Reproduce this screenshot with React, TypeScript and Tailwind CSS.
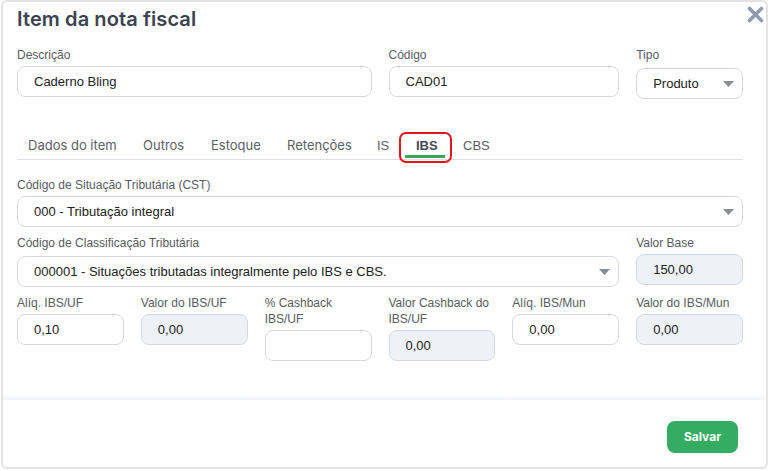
import React from "react";

const LABEL = "text-[12px] leading-[16px] text-[#585c63] mb-[3px]";
const SANS = { fontFamily: '"Liberation Sans", Arial, sans-serif' } as React.CSSProperties;
const INTER = { fontFamily: 'Inter, "Noto Sans", sans-serif' } as React.CSSProperties;

function Caret() {
  return (
    <svg width="11" height="6" viewBox="0 0 11 6" className="shrink-0">
      <path d="M0 0 L11 0 L5.5 6 Z" fill="#8a8d92" />
    </svg>
  );
}

function Box({
  value,
  grey,
  select,
  className = "",
}: {
  value?: string;
  grey?: boolean;
  select?: boolean;
  className?: string;
}) {
  return (
    <div
      className={`h-[31px] rounded-[8px] border border-[#d3d9e1] pl-[16px] pr-[8px] flex items-center text-[13px] text-[#222] ${
        grey ? "bg-[#eef1f5]" : "bg-white"
      } ${className}`}
    >
      <span className="flex-1 truncate">{value}</span>
      {select && <Caret />}
    </div>
  );
}

function Field({
  label,
  value,
  grey,
  select,
  className = "",
  boxClass = "",
}: {
  label: React.ReactNode;
  value?: string;
  grey?: boolean;
  select?: boolean;
  className?: string;
  boxClass?: string;
}) {
  return (
    <div className={`flex flex-col ${className}`}>
      <div className={LABEL}>{label}</div>
      <Box value={value} grey={grey} select={select} className={boxClass} />
    </div>
  );
}

export default function App() {
  return (
    <div className="w-[770px] h-[471px] bg-white pl-[1px] pr-[2px] pt-0 pb-[2px]" style={SANS}>
      <div className="relative h-full border-2 border-[#e3e3e3] rounded-[6px] flex flex-col overflow-hidden">
        {/* close */}
        <div className="absolute right-[2px] top-[4px] w-[17px] h-[17px]">
          <svg width="17" height="17" viewBox="0 0 17 17">
            <path d="M2.5 2.5 L14.5 14.5 M14.5 2.5 L2.5 14.5" stroke="#8e9bb0" strokeWidth="3.6" strokeLinecap="round" />
          </svg>
        </div>

        <div className="flex-1 flex flex-col pl-[14px] pr-[23px]">
          <h1
            className="mt-[3px] h-[28px] leading-[28px] text-[20px] font-semibold text-[#3b4250] tracking-[0.1px]"
            style={INTER}
          >
            Item da nota fiscal
          </h1>

          <div className="mt-[14px] grid grid-cols-6 gap-x-[17px]">
            <Field className="col-span-3" label="Descrição" value="Caderno Bling" />
            <Field className="col-span-2" label="Código" value="CAD01" />
            <Field className="col-span-1" label="Tipo" value="Produto" select boxClass="mt-[2px]" />
          </div>

          {/* tabs */}
          <div className="mt-[32px] h-[29px] pt-[2px] border-b border-[#dde1e7] flex items-center pl-[11px] text-[13px] text-[#5c6068]">
            <span className="w-[115px]" style={INTER}>Dados do item</span>
            <span className="w-[68px]" style={INTER}>Outros</span>
            <span className="w-[76px]" style={INTER}>Estoque</span>
            <span className="w-[90px]" style={INTER}>Retenções</span>
            <span className="w-[39px]">IS</span>
            <span className="w-[47px] relative inline-block leading-[16px]">
              <span className="font-bold text-[#454b55]">IBS</span>
              <span className="absolute left-[-11px] w-[40px] top-[17px] h-[3px] bg-[#3aa757]" />
              <span className="absolute left-[-17px] w-[53px] top-[-6px] h-[31px] rounded-[7px] border-2 border-[#e3141c]" />
            </span>
            <span>CBS</span>
          </div>

          <div className="mt-[17px] grid grid-cols-6 gap-x-[17px] gap-y-[8px] items-start">
            <Field className="col-span-6" label="Código de Situação Tributária (CST)" value="000 - Tributação integral" select />
            <Field
              className="col-span-5"
              label="Código de Classificação Tributária"
              value="000001 - Situações tributadas integralmente pelo IBS e CBS."
              select
              boxClass="mt-[2px]"
            />
            <Field className="col-span-1" label="Valor Base" value="150,00" grey />

            <Field label="Alíq. IBS/UF" value="0,10" />
            <Field label="Valor do IBS/UF" value="0,00" grey />
            <Field label={<>% Cashback<br />IBS/UF</>} value="" />
            <Field label={<>Valor Cashback do<br />IBS/UF</>} value="0,00" grey />
            <Field label="Alíq. IBS/Mun" value="0,00" />
            <Field label="Valor do IBS/Mun" value="0,00" grey />
          </div>

          <div className="flex-1" />
        </div>
        <div className="h-[6px] bg-gradient-to-b from-white to-[#f1f3f6]" />

        <div className="h-[67px] flex justify-end items-start pt-[21px] pr-[28px]">
          <button
            className="w-[71px] h-[32px] rounded-[8px] bg-[#34ad62] text-white text-[12px] font-bold"
            style={INTER}
          >
            Salvar
          </button>
        </div>
      </div>
    </div>
  );
}
